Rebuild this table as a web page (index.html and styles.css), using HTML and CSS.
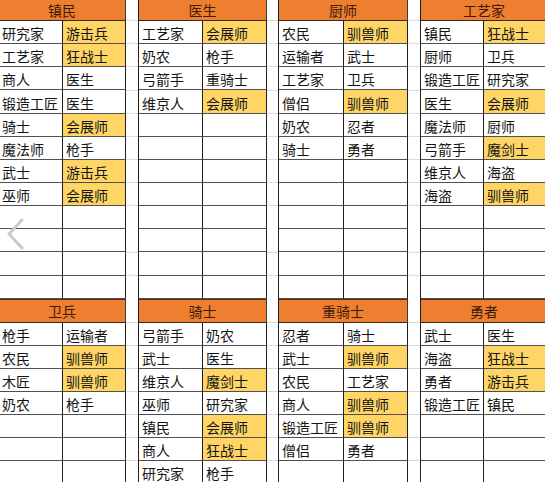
FILE: index.html
```html
<!DOCTYPE html>
<html lang="zh-CN">
<head>
<meta charset="utf-8">
<title>职业搭配表</title>
<link rel="stylesheet" href="styles.css">
</head>
<body>
<div class="sheet">
  <div class="band band-top">
    <div class="tbl t1">
      <div class="hd">镇民</div>
      <div class="c">研究家</div><div class="c hl">游击兵</div>
      <div class="c">工艺家</div><div class="c hl">狂战士</div>
      <div class="c">商人</div><div class="c">医生</div>
      <div class="c">锻造工匠</div><div class="c">医生</div>
      <div class="c">骑士</div><div class="c hl">会展师</div>
      <div class="c">魔法师</div><div class="c">枪手</div>
      <div class="c">武士</div><div class="c hl">游击兵</div>
      <div class="c">巫师</div><div class="c hl">会展师</div>
      <div class="c"></div><div class="c"></div>
      <div class="c"></div><div class="c"></div>
      <div class="c"></div><div class="c"></div>
      <div class="c"></div><div class="c"></div>
    </div>
    <div class="sp sp-a"></div>
    <div class="tbl t2">
      <div class="hd">医生</div>
      <div class="c">工艺家</div><div class="c hl">会展师</div>
      <div class="c">奶农</div><div class="c">枪手</div>
      <div class="c">弓箭手</div><div class="c">重骑士</div>
      <div class="c">维京人</div><div class="c hl">会展师</div>
      <div class="c"></div><div class="c"></div>
      <div class="c"></div><div class="c"></div>
      <div class="c"></div><div class="c"></div>
      <div class="c"></div><div class="c"></div>
      <div class="c"></div><div class="c"></div>
      <div class="c"></div><div class="c"></div>
      <div class="c"></div><div class="c"></div>
      <div class="c"></div><div class="c"></div>
    </div>
    <div class="sp sp-b"></div>
    <div class="tbl t3">
      <div class="hd">厨师</div>
      <div class="c">农民</div><div class="c hl">驯兽师</div>
      <div class="c">运输者</div><div class="c">武士</div>
      <div class="c">工艺家</div><div class="c">卫兵</div>
      <div class="c">僧侣</div><div class="c hl">驯兽师</div>
      <div class="c">奶农</div><div class="c">忍者</div>
      <div class="c">骑士</div><div class="c">勇者</div>
      <div class="c"></div><div class="c"></div>
      <div class="c"></div><div class="c"></div>
      <div class="c"></div><div class="c"></div>
      <div class="c"></div><div class="c"></div>
      <div class="c"></div><div class="c"></div>
      <div class="c"></div><div class="c"></div>
    </div>
    <div class="sp sp-a"></div>
    <div class="tbl t4">
      <div class="hd">工艺家</div>
      <div class="c">镇民</div><div class="c hl">狂战士</div>
      <div class="c">厨师</div><div class="c">卫兵</div>
      <div class="c">锻造工匠</div><div class="c">研究家</div>
      <div class="c">医生</div><div class="c hl">会展师</div>
      <div class="c">魔法师</div><div class="c">厨师</div>
      <div class="c">弓箭手</div><div class="c hl">魔剑士</div>
      <div class="c">维京人</div><div class="c">海盗</div>
      <div class="c">海盗</div><div class="c hl">驯兽师</div>
      <div class="c"></div><div class="c"></div>
      <div class="c"></div><div class="c"></div>
      <div class="c"></div><div class="c"></div>
      <div class="c"></div><div class="c"></div>
    </div>
  </div>

  <div class="band band-bottom">
    <div class="tbl t1">
      <div class="hd">卫兵</div>
      <div class="c">枪手</div><div class="c">运输者</div>
      <div class="c">农民</div><div class="c hl">驯兽师</div>
      <div class="c">木匠</div><div class="c hl">驯兽师</div>
      <div class="c">奶农</div><div class="c">枪手</div>
      <div class="c"></div><div class="c"></div>
      <div class="c"></div><div class="c"></div>
      <div class="c"></div><div class="c"></div>
    </div>
    <div class="sp sp-a"></div>
    <div class="tbl t2">
      <div class="hd">骑士</div>
      <div class="c">弓箭手</div><div class="c">奶农</div>
      <div class="c">武士</div><div class="c">医生</div>
      <div class="c">维京人</div><div class="c hl">魔剑士</div>
      <div class="c">巫师</div><div class="c">研究家</div>
      <div class="c">镇民</div><div class="c hl">会展师</div>
      <div class="c">商人</div><div class="c hl">狂战士</div>
      <div class="c">研究家</div><div class="c">枪手</div>
    </div>
    <div class="sp sp-b"></div>
    <div class="tbl t3">
      <div class="hd">重骑士</div>
      <div class="c">忍者</div><div class="c">骑士</div>
      <div class="c">武士</div><div class="c hl">驯兽师</div>
      <div class="c">农民</div><div class="c">工艺家</div>
      <div class="c">商人</div><div class="c hl">驯兽师</div>
      <div class="c">锻造工匠</div><div class="c hl">驯兽师</div>
      <div class="c">僧侣</div><div class="c">勇者</div>
      <div class="c"></div><div class="c"></div>
    </div>
    <div class="sp sp-a"></div>
    <div class="tbl t4">
      <div class="hd">勇者</div>
      <div class="c">武士</div><div class="c">医生</div>
      <div class="c">海盗</div><div class="c hl">狂战士</div>
      <div class="c">勇者</div><div class="c hl">游击兵</div>
      <div class="c">锻造工匠</div><div class="c">镇民</div>
      <div class="c"></div><div class="c"></div>
      <div class="c"></div><div class="c"></div>
      <div class="c"></div><div class="c"></div>
    </div>
  </div>
</div>

<svg class="nav-prev" width="22" height="34" viewBox="0 0 22 34" aria-hidden="true">
  <polyline points="17,2 4,16 17,30" fill="none" stroke="#c9c9c9" stroke-width="3" stroke-linecap="round" stroke-linejoin="round"/>
</svg>
</body>
</html>
```

FILE: styles.css
```css
* {
  box-sizing: border-box;
}

html, body {
  margin: 0;
  padding: 0;
  background: #ffffff;
}

body {
  width: 545px;
  height: 482px;
  overflow: hidden;
  position: relative;
  font-family: "Noto Sans CJK SC", "Noto Sans", sans-serif;
  font-size: 14px;
  color: #141414;
}

.sheet {
  margin-left: -2px;
  display: flex;
  flex-direction: column;
}

.band {
  display: flex;
  align-items: stretch;
}

.tbl {
  display: grid;
  grid-template-columns: 64px 64px;
  border-left: 1px solid #1e1e1e;
}

.t1 { grid-template-columns: 64px 63px; }
.t3 { grid-template-columns: 65px 64px; }
.t4 { grid-template-columns: 63px 64px; }

.band-top .tbl {
  grid-template-rows: 21px repeat(12, 23.15px);
}

.band-bottom .tbl {
  grid-template-rows: 24px repeat(7, 23px);
}

.hd {
  grid-column: span 2;
  background: #ef7f30;
  color: #3e1a07;
  border-right: 1px solid #3a3a3a;
  border-bottom: 1px solid #3a2a20;
  display: flex;
  align-items: center;
  justify-content: center;
  line-height: 1;
}

.band-bottom .hd {
  border-top: 1px solid #6a2c10;
  padding-top: 1px;
}

.c {
  border-right: 1px solid #1e1e1e;
  border-bottom: 1px solid #505050;
  display: flex;
  align-items: flex-end;
  padding: 0 1px 0 3px;
  line-height: 20px;
  white-space: nowrap;
  overflow: hidden;
}

.c.hl {
  background: #ffd666;
}

.sp {
  flex: none;
}

.sp-a { width: 12px; }
.sp-b { width: 11px; }

.band-top .sp {
  background-image: repeating-linear-gradient(to bottom, transparent 0, transparent 22.15px, #d8d8d8 22.15px, #d8d8d8 23.15px);
  background-position: 0 -2.15px;
}

.band-bottom .sp {
  background-image: repeating-linear-gradient(to bottom, transparent 0, transparent 22px, #d8d8d8 22px, #d8d8d8 23px);
  background-position: 0 1px;
}

.nav-prev {
  position: absolute;
  left: 5px;
  top: 218px;
}
```
